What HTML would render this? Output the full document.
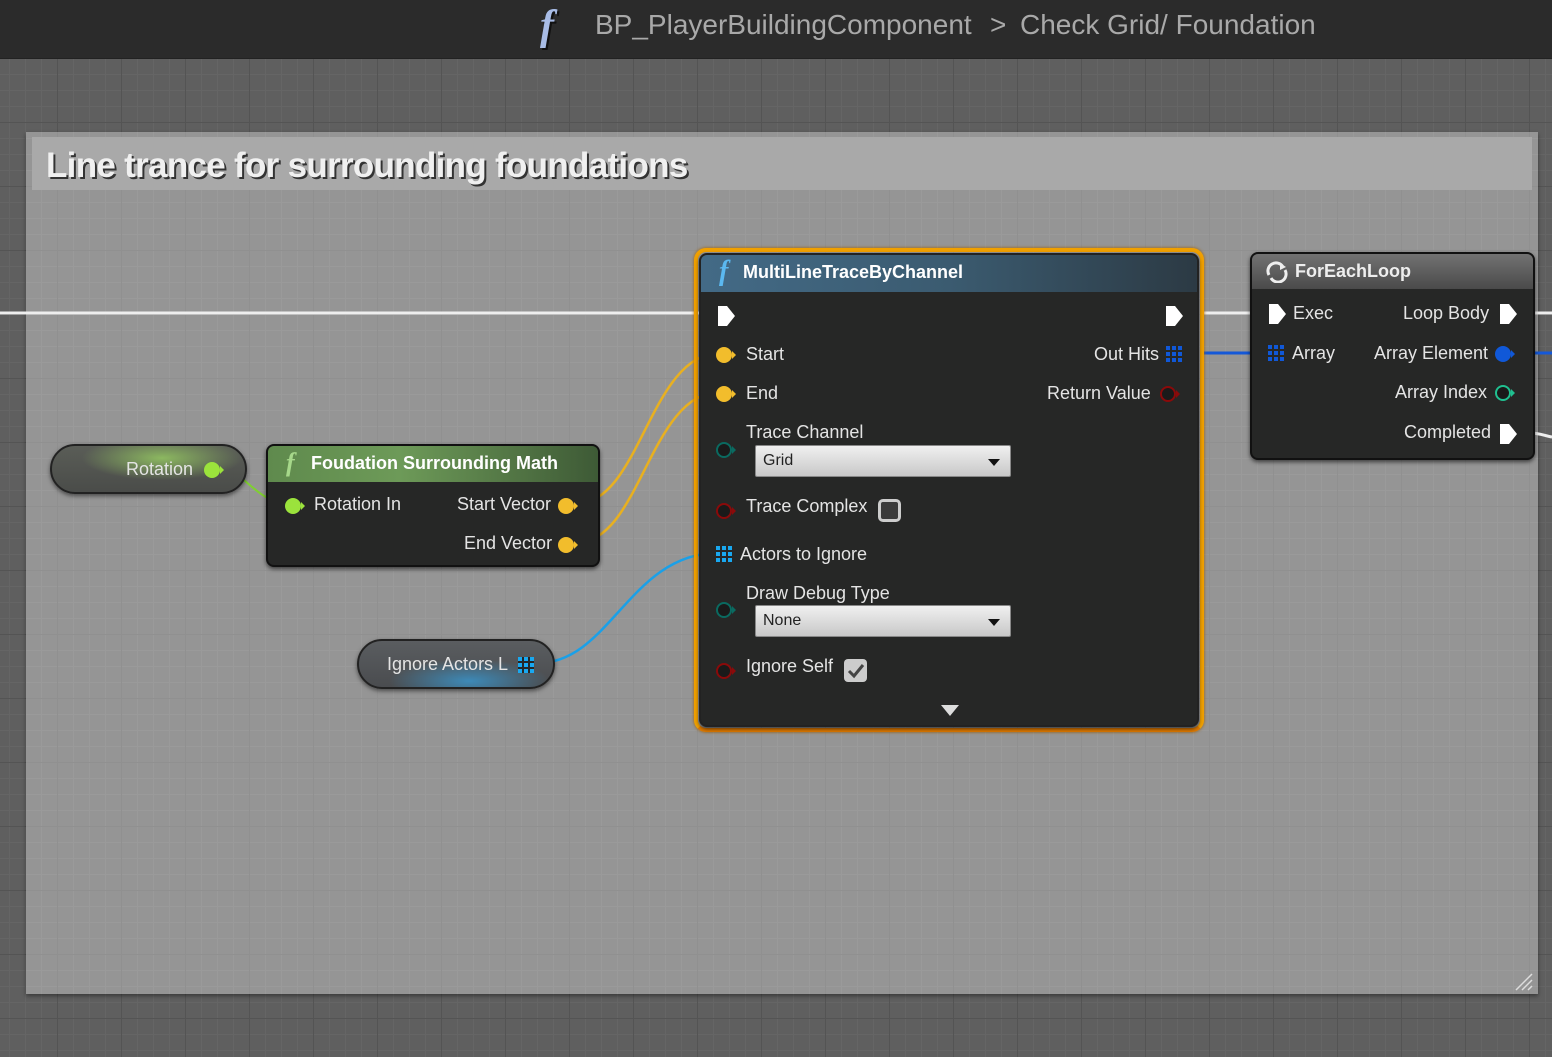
<!DOCTYPE html>
<html><head><meta charset="utf-8"><style>
*{margin:0;padding:0;box-sizing:border-box}
body{width:1552px;height:1057px;overflow:hidden;position:relative;font-family:"Liberation Sans",sans-serif;background:#5f5f5f;
background-image:linear-gradient(#545454 1px,transparent 1px),linear-gradient(90deg,#545454 1px,transparent 1px),linear-gradient(#656565 1px,transparent 1px),linear-gradient(90deg,#656565 1px,transparent 1px);
background-size:64px 64px,64px 64px,16px 16px,16px 16px;background-position:-7px -6px}
.top{position:absolute;left:0;top:0;width:1552px;height:59px;background:#2b2b2b;border-bottom:1px solid #222}
.top .t{position:absolute;top:9px;font-size:28px;color:#a9a9a9}
.cmt{position:absolute;left:26px;top:132px;width:1512px;height:862px;background:#959595;box-shadow:0 2px 4px rgba(0,0,0,.4);
background-image:linear-gradient(#909090 1px,transparent 1px),linear-gradient(90deg,#909090 1px,transparent 1px),linear-gradient(#9a9a9a 1px,transparent 1px),linear-gradient(90deg,#9a9a9a 1px,transparent 1px);
background-size:64px 64px,64px 64px,16px 16px,16px 16px;background-position:-33px -138px}
.cmth{position:absolute;left:32px;top:137px;width:1500px;height:53px;background:#a9a9a9}
.cmth span{position:absolute;left:14px;top:9px;font-size:35px;font-weight:bold;color:#f0f0f0;text-shadow:2px 2px 0 #333;letter-spacing:-0.7px}
.node{position:absolute;background:#262726;border-radius:8px;box-shadow:0 2px 4px rgba(0,0,0,.6);border:2px solid #111}
.hdr{position:absolute;left:0;right:0;top:0;border-radius:6px 6px 0 0;color:#fff;font-weight:bold;font-size:18px}
.lbl{position:absolute;color:#e4e4e4;font-size:18px;white-space:nowrap}
.pin{position:absolute;width:16px;height:16px;border-radius:50%;margin:-1px 0 0 -1px}
.arr{position:absolute;width:0;height:0;border-top:4px solid transparent;border-bottom:4px solid transparent}
.ex{position:absolute}
.drop{position:absolute;height:32px;background:linear-gradient(#f0f0f0,#c8c8c8);border:1px solid #888;border-radius:2px;color:#222;font-size:16px;padding:6px 7px}
.drop:after{content:"";position:absolute;right:10px;top:13px;border-left:6px solid transparent;border-right:6px solid transparent;border-top:7px solid #111}
.pill{position:absolute;height:50px;border-radius:25px;border:2px solid #222;box-shadow:0 2px 4px rgba(0,0,0,.5)}
.grid{position:absolute;width:16px;height:16px;background-image:linear-gradient(90deg,transparent 4px,#262726 4px,#262726 6px,transparent 6px,transparent 10px,#262726 10px,#262726 12px,transparent 12px),linear-gradient(transparent 4px,#262726 4px,#262726 6px,transparent 6px,transparent 10px,#262726 10px,#262726 12px,transparent 12px)}
</style></head><body>
<div class="top">
<span class="t" style="left:540px;top:2px;font-family:'Liberation Serif',serif;font-style:italic;font-weight:bold;font-size:42px;color:#a8bce6;text-shadow:2px 2px 0 #111">f</span>
<span class="t" style="left:595px">BP_PlayerBuildingComponent</span>
<span class="t" style="left:990px">&gt;</span>
<span class="t" style="left:1020px">Check Grid/ Foundation</span>
</div>
<div class="cmt"></div>
<div class="cmth"><span>Line trance for surrounding foundations</span></div>
<svg style="position:absolute;left:1512px;top:970px" width="24" height="22"><path d="M4 20L20 4M10 20L20 10M16 20L20 16" stroke="#ddd" stroke-width="1.5"/></svg>

<svg style="position:absolute;left:0;top:0" width="1552" height="1057">
<path d="M0 313H700M1200 313H1255M1530 313H1552M1530 433C1540 433 1545 436 1552 437" stroke="#eee" stroke-width="3" fill="none"/>
<path d="M1200 353H1268M1510 353H1552" stroke="#1458d8" stroke-width="3" fill="none"/>
<path d="M578 503C640 503 650 353 720 353M578 542C640 542 650 392 720 392" stroke="#e8b020" stroke-width="2.5" fill="none"/>
<path d="M538 663C610 663 630 553 718 553" stroke="#1aa0e8" stroke-width="2.5" fill="none"/>
<path d="M220 469C245 469 255 504 292 504" stroke="#7fd030" stroke-width="2" fill="none"/>
</svg>

<div class="pill" style="left:50px;top:444px;width:197px;background:radial-gradient(ellipse 80px 22px at 110px 12px,#8cb860,transparent),linear-gradient(#5a5d57,#4a4c49)">
<span class="lbl" style="left:74px;top:13px;font-size:18px">Rotation</span>
<div class="pin" style="left:153px;top:17px;background:#9be33c"></div><div class="arr" style="left:168px;top:20px;border-left:4px solid #9be33c"></div>
</div>
<div class="pill" style="left:357px;top:639px;width:198px;background:radial-gradient(ellipse 80px 22px at 110px 40px,#3d8ab8,transparent),linear-gradient(#5a5d60,#4a4c4f)">
<span class="lbl" style="left:28px;top:13px">Ignore Actors L</span>
<div class="grid" style="left:159px;top:16px;background-color:#19a8f0"></div>
</div>

<div class="node" style="left:266px;top:444px;width:334px;height:123px">
<div class="hdr" style="height:36px;background:linear-gradient(90deg,#5f8a4d,#6d9a58 40%,#3e5a36);">
<span style="position:absolute;left:18px;top:2px;font-family:'Liberation Serif',serif;font-style:italic;font-size:26px;color:#a6d88a">f</span>
<span style="position:absolute;left:43px;top:7px">Foudation Surrounding Math</span></div>
<div class="pin" style="left:18px;top:53px;background:#9be33c"></div><div class="arr" style="left:33px;top:56px;border-left:4px solid #9be33c"></div>
<span class="lbl" style="left:46px;top:48px">Rotation In</span>
<span class="lbl" style="left:189px;top:48px">Start Vector</span>
<div class="pin" style="left:291px;top:53px;background:#f2bd2c"></div><div class="arr" style="left:306px;top:56px;border-left:4px solid #f2bd2c"></div>
<span class="lbl" style="left:196px;top:87px">End Vector</span>
<div class="pin" style="left:291px;top:92px;background:#f2bd2c"></div><div class="arr" style="left:306px;top:95px;border-left:4px solid #f2bd2c"></div>
</div>

<div style="position:absolute;left:694px;top:248px;width:510px;height:484px;border:4px solid #f0a000;border-bottom-color:#e07a00;border-radius:12px;box-shadow:0 0 3px #a06000"></div>
<div class="node" style="left:699px;top:253px;width:500px;height:474px;border-color:#222">
<div class="hdr" style="height:37px;background:linear-gradient(90deg,#436a86,#3b5b70 50%,#2c3a44);">
<span style="position:absolute;left:18px;top:1px;font-family:'Liberation Serif',serif;font-style:italic;font-size:28px;color:#5bb8f0">f</span>
<span style="position:absolute;left:42px;top:7px">MultiLineTraceByChannel</span></div>
<svg class="ex" style="left:16px;top:50px" width="20" height="22"><path d="M1 1H10L18 11L10 21H1Z" fill="#fff"/></svg>
<svg class="ex" style="left:464px;top:50px" width="20" height="22"><path d="M1 1H10L18 11L10 21H1Z" fill="#fff"/></svg>
<div class="pin" style="left:16px;top:93px;background:#f2bd2c"></div><div class="arr" style="left:31px;top:96px;border-left:4px solid #f2bd2c"></div>
<span class="lbl" style="left:45px;top:89px">Start</span>
<span class="lbl" style="left:393px;top:89px">Out Hits</span>
<div class="grid" style="left:465px;top:91px;background-color:#1058d8"></div>
<div class="pin" style="left:16px;top:132px;background:#f2bd2c"></div><div class="arr" style="left:31px;top:135px;border-left:4px solid #f2bd2c"></div>
<span class="lbl" style="left:45px;top:128px">End</span>
<span class="lbl" style="left:346px;top:128px">Return Value</span>
<div class="pin" style="left:460px;top:132px;border:2px solid #8a0a0a;background:#1a1a1a"></div><div class="arr" style="left:475px;top:135px;border-left:4px solid #8a0a0a"></div>
<span class="lbl" style="left:45px;top:167px">Trace Channel</span>
<div class="pin" style="left:16px;top:188px;border:2px solid #0a6a60;background:#1a1a1a"></div><div class="arr" style="left:31px;top:191px;border-left:4px solid #0a6a60"></div>
<div class="drop" style="left:54px;top:190px;width:256px">Grid</div>
<span class="lbl" style="left:45px;top:241px">Trace Complex</span>
<div class="pin" style="left:16px;top:249px;border:2px solid #8a0a0a;background:#1a1a1a"></div><div class="arr" style="left:31px;top:252px;border-left:4px solid #8a0a0a"></div>
<div style="position:absolute;left:177px;top:244px;width:23px;height:23px;border:3px solid #ccc;border-radius:5px;background:#3a3a3a"></div>
<div class="grid" style="left:15px;top:291px;background-color:#19a8f0"></div>
<span class="lbl" style="left:39px;top:289px">Actors to Ignore</span>
<span class="lbl" style="left:45px;top:328px">Draw Debug Type</span>
<div class="pin" style="left:16px;top:348px;border:2px solid #0a6a60;background:#1a1a1a"></div><div class="arr" style="left:31px;top:351px;border-left:4px solid #0a6a60"></div>
<div class="drop" style="left:54px;top:350px;width:256px">None</div>
<span class="lbl" style="left:45px;top:401px">Ignore Self</span>
<div class="pin" style="left:16px;top:409px;border:2px solid #8a0a0a;background:#1a1a1a"></div><div class="arr" style="left:31px;top:412px;border-left:4px solid #8a0a0a"></div>
<div style="position:absolute;left:143px;top:404px;width:23px;height:23px;border-radius:4px;background:#ccc"><svg width="23" height="23"><path d="M5 12L10 17L19 6" stroke="#444" stroke-width="3" fill="none"/></svg></div>
<div style="position:absolute;left:240px;top:450px;border-left:9px solid transparent;border-right:9px solid transparent;border-top:11px solid #ddd"></div>
</div>

<div class="node" style="left:1250px;top:252px;width:285px;height:208px">
<div class="hdr" style="height:35px;background:linear-gradient(#727272,#4a4a4a);">
<svg style="position:absolute;left:13px;top:7px" width="24" height="22"><path d="M4 14A8 8 0 0 1 18 6M20 9A8 8 0 0 1 6 17" stroke="#eee" stroke-width="3" fill="none"/><path d="M15 2L21 6L15 9Z" fill="#eee"/></svg>
<span style="position:absolute;left:43px;top:7px;color:#eee">ForEachLoop</span></div>
<svg class="ex" style="left:16px;top:49px" width="20" height="22"><path d="M1 1H10L18 11L10 21H1Z" fill="#fff"/></svg>
<span class="lbl" style="left:41px;top:49px">Exec</span>
<span class="lbl" style="left:151px;top:49px">Loop Body</span>
<svg class="ex" style="left:247px;top:49px" width="20" height="22"><path d="M1 1H10L18 11L10 21H1Z" fill="#fff"/></svg>
<div class="grid" style="left:16px;top:91px;background-color:#1058d8"></div>
<span class="lbl" style="left:40px;top:89px">Array</span>
<span class="lbl" style="left:122px;top:89px">Array Element</span>
<div class="pin" style="left:244px;top:93px;background:#1058d8"></div><div class="arr" style="left:259px;top:96px;border-left:4px solid #1058d8"></div>
<span class="lbl" style="left:143px;top:128px">Array Index</span>
<div class="pin" style="left:244px;top:132px;border:2px solid #20c090;background:#1a1a1a"></div><div class="arr" style="left:259px;top:135px;border-left:4px solid #20c090"></div>
<span class="lbl" style="left:152px;top:168px">Completed</span>
<svg class="ex" style="left:247px;top:169px" width="20" height="22"><path d="M1 1H10L18 11L10 21H1Z" fill="#fff"/></svg>
</div>
</body></html>
